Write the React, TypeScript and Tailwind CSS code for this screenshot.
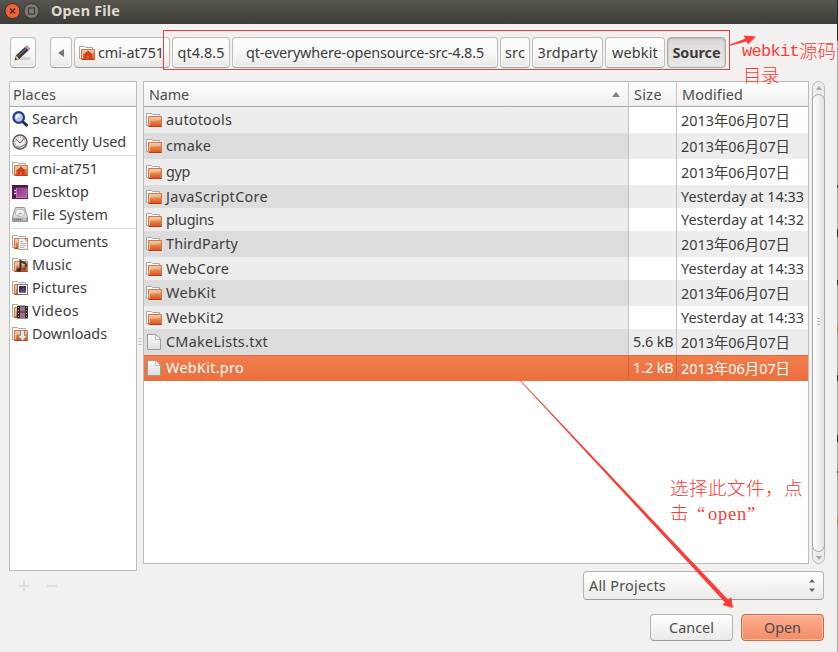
import { useLayoutEffect, useRef, useState, type ReactNode } from "react";

/** Single-line label whose letter spacing is adjusted to fill a given advance width. */
function Label({ children, w, className = "" }: { children: string; w: number; className?: string }) {
  const ref = useRef<HTMLSpanElement>(null);
  const [spacing, setSpacing] = useState(0);
  useLayoutEffect(() => {
    if (!ref.current) return;
    const natural = ref.current.getBoundingClientRect().width - spacing * children.length;
    setSpacing((w - natural) / children.length);
  }, [children, w]);
  return (
    <span ref={ref} className={`inline-block shrink-0 whitespace-pre ${className}`} style={{ letterSpacing: spacing }}>
      {children}
    </span>
  );
}

function FolderBase({ dim = false }: { dim?: boolean }) {
  return (
    <>
      <path d="M.5 13.5V1.5H5.5L6.5 2.5H13.5V13.5Z" fill={dim ? "#f6f6f5" : "#fff"} stroke="#aaa9a6" />
      <path d="M2.5 4.5H15.5V14.5H2.5Z" fill="url(#folderFill)" stroke="#d4764b" />
      <path d="M3 14.5H15.5" stroke="#bf3b17" />
      <path d="M3.5 9V5.5H14.5V8Q9 8.5 3.5 9Z" fill="#fff" opacity=".3" />
      <path d="M3.5 13.5V5.5H14.5" fill="none" stroke="#f6c9a4" strokeWidth=".8" />
    </>
  );
}

type IconName =
  | "folder" | "home" | "file" | "search" | "recent" | "desktop" | "disk"
  | "documents" | "music" | "pictures" | "videos" | "downloads";

function Icon({ name }: { name: IconName }) {
  return (
    <svg width="16" height="16" viewBox="0 0 16 16" className="shrink-0">
      {name === "folder" && <FolderBase />}
      {name === "home" && (
        <>
          <FolderBase />
          <path d="M9 5.5L4 10H5.3V13.5H8V11H10V13.5H12.7V10H14Z" fill="#c8401c" />
        </>
      )}
      {name === "file" && (
        <>
          <path d="M1.5 .5H10L14.5 5V15.5H1.5Z" fill="url(#paperFill)" stroke="#9b9b99" />
          <path d="M9.5 .5V5.5H14.5Z" fill="#fff" stroke="#aaa" strokeWidth=".8" />
        </>
      )}
      {name === "search" && (
        <>
          <path d="M10.5 10.5L14.5 14.2" stroke="#26324d" strokeWidth="3" strokeLinecap="round" />
          <circle cx="6.7" cy="6.5" r="5.3" fill="#b9c8e6" stroke="#25398f" strokeWidth="2.2" />
          <path d="M3.5 6.5A3.3 3.3 0 0 1 8.5 3.5L4.5 8Z" fill="#f3f7fd" />
        </>
      )}
      {name === "recent" && (
        <>
          <circle cx="8" cy="8" r="7" fill="#eee" stroke="#55565a" strokeWidth="1.4" />
          <circle cx="8" cy="8" r="5.1" fill="none" stroke="#98989a" strokeWidth="1.2" strokeDasharray="1 1.6" />
          <path d="M4 5L8 9L12.5 4" fill="none" stroke="#54565a" />
          <path d="M8 9L11 6" stroke="#cc2b24" />
          <path d="M2 12Q7 15 14 10" fill="none" stroke="#77787a" />
        </>
      )}
      {name === "desktop" && (
        <>
          <rect x=".5" y="1.5" width="15" height="13" fill="url(#purpleFill)" stroke="#582050" />
          <path d="M1 2.5H15" stroke="#351c33" strokeWidth="2" />
          <path d="M2.5 4V14" stroke="#511548" strokeWidth="3" />
          <path d="M2 6.5H4M2 9.5H4" stroke="#e9c7e3" strokeWidth="1.5" />
          <path d="M4.5 4V13.5H15V4" fill="none" stroke="#d188c4" strokeWidth=".7" />
        </>
      )}
      {name === "disk" && (
        <>
          <path d="M3.5 .5H12.5L15.5 10V14.5H.5V10Z" fill="#dededd" stroke="#969696" />
          <ellipse cx="8" cy="5.7" rx="4.5" ry="3.7" fill="#efefef" stroke="#b6b6b6" />
          <path d="M5.5 9.5L8 6L10 7" fill="none" stroke="#a5a5a5" />
          <path d="M1 10.8H15V14H1Z" fill="#a7a8a6" />
          <path d="M2 12.5H9" stroke="#686968" strokeWidth="1.5" strokeDasharray="1 1" />
          <path d="M11 12.5H14" stroke="#ddd" />
        </>
      )}
      {name === "documents" && (
        <>
          <FolderBase dim />
          <path d="M6.5 4.5H12L15.5 8V15.5H6.5Z" fill="#f0f0ee" stroke="#aaa" />
          <path d="M8 7.5H11M8 9.5H14M8 11.5H14M8 13.5H12" stroke="#aaa" strokeWidth=".8" />
        </>
      )}
      {name === "music" && (
        <>
          <FolderBase dim />
          <path d="M8.5 12V4L13.5 6.5Q14.5 8 13.5 10" fill="none" stroke="#353536" strokeWidth="2" />
          <ellipse cx="7" cy="13" rx="2.5" ry="2" fill="#353536" />
          <ellipse cx="12.3" cy="12" rx="2" ry="1.7" fill="#555" />
        </>
      )}
      {name === "pictures" && (
        <>
          <FolderBase dim />
          <path d="M5.5 4.5H15.5V14.5H5.5Z" fill="#fff" stroke="#777" />
          <path d="M7 6H14V12.5H7Z" fill="#392b4e" />
          <path d="M8 11L11 7L14 10V12.5H8Z" fill="#655b7d" opacity=".6" />
        </>
      )}
      {name === "videos" && (
        <>
          <FolderBase dim />
          <path d="M5 3H16V15.5H5Z" fill="#2e282c" />
          <path d="M8 3.5H13V8.5H8ZM8 9.5H13V15H8Z" fill="#a46c91" />
          <path d="M6.5 4V15M14.5 4V15" stroke="#d8cdd2" strokeWidth=".8" strokeDasharray="1 2" />
        </>
      )}
      {name === "downloads" && (
        <>
          <FolderBase dim />
          <path d="M8.5 4.5H12.5V9.5H15.5L10.5 15L5.5 9.5H8.5Z" fill="#e4e4e2" stroke="#8b8b89" />
        </>
      )}
    </svg>
  );
}

function PathButton({ width, children, active = false }: { width: string; children: ReactNode; active?: boolean }) {
  const skin = active
    ? "bg-linear-to-b from-[#dddbd9] to-[#ebe9e7] border-[#aaa8a5] shadow-[inset_0_1px_3px_#b7b5b3]"
    : "bg-linear-to-b from-white via-[#f8f8f7] to-[#e9e8e6] border-[#bfbdb9] border-b-[#a09e9a] shadow-[inset_0_0_0_1px_#fafaf9]";
  return (
    <div className={`flex h-[31px] shrink-0 items-center justify-center overflow-hidden rounded-[4px] border ${skin} ${width}`}>
      {children}
    </div>
  );
}

type Place = { icon: IconName; text: string; w: number };
const placeGroups: Place[][] = [
  [
    { icon: "search", text: "Search", w: 46 },
    { icon: "recent", text: "Recently Used", w: 94 },
  ],
  [
    { icon: "home", text: "cmi-at751", w: 66 },
    { icon: "desktop", text: "Desktop", w: 57 },
    { icon: "disk", text: "File System", w: 76 },
  ],
  [
    { icon: "documents", text: "Documents", w: 76 },
    { icon: "music", text: "Music", w: 40 },
    { icon: "pictures", text: "Pictures", w: 55 },
    { icon: "videos", text: "Videos", w: 47 },
    { icon: "downloads", text: "Downloads", w: 75 },
  ],
];

const DATE = "2013年06月07日";
type Row = { name: string; w: number; modified: string; size?: string; file?: boolean; selected?: boolean };
const rows: Row[] = [
  { name: "autotools", w: 66, modified: DATE },
  { name: "cmake", w: 45, modified: DATE },
  { name: "gyp", w: 24, modified: DATE },
  { name: "JavaScriptCore", w: 102, modified: "Yesterday at 14:33" },
  { name: "plugins", w: 48, modified: "Yesterday at 14:32" },
  { name: "ThirdParty", w: 72, modified: DATE },
  { name: "WebCore", w: 63, modified: "Yesterday at 14:33" },
  { name: "WebKit", w: 50, modified: DATE },
  { name: "WebKit2", w: 58, modified: "Yesterday at 14:33" },
  { name: "CMakeLists.txt", w: 102, modified: DATE, size: "5.6 kB", file: true },
  { name: "WebKit.pro", w: 78, modified: DATE, size: "1.2 kB", file: true, selected: true },
];

function FileRow({ row, index }: { row: Row; index: number }) {
  const tall = row.modified === DATE;
  const odd = index % 2 === 1;
  const nameBg = row.selected ? "" : odd ? "bg-[#dcdcdc]" : "bg-[#ededed]";
  const cellBg = row.selected ? "" : odd ? "bg-[#ededed]" : "bg-white";
  const line = row.selected ? "border-[#c8653c]" : "border-[#c3c3c3]";
  return (
    <div
      className={`flex ${tall ? "h-[26px]" : "h-[23px]"} ${
        row.selected ? "bg-linear-to-b from-[#f37d4c] to-[#ea6f3e] text-white shadow-[inset_0_1px_0_#e2673a]" : ""
      }`}
    >
      <div className={`flex w-[485px] items-center gap-1 border-r pl-[2px] ${nameBg} ${line}`}>
        <Icon name={row.file ? "file" : "folder"} />
        <Label w={row.w}>{row.name}</Label>
      </div>
      <div className={`flex w-12 items-center border-r pl-1 ${cellBg} ${line}`}>
        {row.size && <Label w={40.5}>{row.size}</Label>}
      </div>
      <div className={`flex flex-1 items-center pl-1 ${tall ? "pt-0.5" : ""} ${cellBg}`}>
        <Label w={tall ? 109 : 123}>{row.modified}</Label>
      </div>
    </div>
  );
}

const headerSkin = "flex h-[25px] items-center border-b border-[#aaa8a4] bg-linear-to-b from-white to-[#f0efee] text-[#4c4c4c]";

export default function App() {
  return (
    <div className="relative flex h-[652px] w-[838px] flex-col overflow-hidden bg-[#f2f1f0] font-['Noto_Sans','Noto_Sans_CJK_SC',sans-serif] text-[14.4px] leading-[20px] text-[#3c3c3c]">
      <svg width="0" height="0" className="absolute">
        <defs>
          <linearGradient id="folderFill" x1="0" y1="0" x2="0" y2="1">
            <stop offset="0" stopColor="#edb583" />
            <stop offset=".5" stopColor="#e58548" />
            <stop offset="1" stopColor="#d9501f" />
          </linearGradient>
          <linearGradient id="paperFill" x1="0" y1="0" x2="0" y2="1">
            <stop offset="0" stopColor="#fafafa" />
            <stop offset="1" stopColor="#dededd" />
          </linearGradient>
          <linearGradient id="purpleFill" x1="0" y1="0" x2="1" y2="1">
            <stop offset="0" stopColor="#8b2681" />
            <stop offset="1" stopColor="#b767ab" />
          </linearGradient>
        </defs>
      </svg>

      <header className="flex h-6 shrink-0 items-center bg-linear-to-b from-[#57554e] to-[#3d3c38] pb-[3px] pl-[4px]">
        <svg width="36" height="18" viewBox="0 0 36 18">
          <circle cx="8.5" cy="9" r="7.5" fill="#ee6238" stroke="#35332e" />
          <path d="M6 6.5L11 11.5M11 6.5L6 11.5" stroke="#54281a" strokeWidth="1.4" />
          <circle cx="27.5" cy="9" r="7.5" fill="#7c7a72" stroke="#35332e" />
          <rect x="24.5" y="6" width="6" height="6" fill="none" stroke="#3c3b37" strokeWidth="1.2" />
        </svg>
        <Label w={69} className="ml-[11px] font-bold text-[#dfdbd2]">Open File</Label>
      </header>

      <nav className="flex h-[57px] shrink-0 gap-0.5 pl-[10px] pt-[13px]">
        <PathButton width="w-[26px] mr-3">
          <svg width="18" height="18" viewBox="0 0 18 18">
            <ellipse cx="10" cy="14.5" rx="7" ry="1.8" fill="#d4d3d1" />
            <path d="M1 16L2.3 11.5L5.5 14.5Z" fill="#eee08c" stroke="#55523a" strokeWidth=".7" />
            <path d="M1 16L1.6 13.8L3 15.2Z" fill="#222" />
            <path d="M2.5 11.2L11.5 3L14.5 6L5.7 14.3Z" fill="#3c3c3c" stroke="#222" strokeWidth=".6" />
            <path d="M4.5 11.5L12 4.6" stroke="#8a8a8a" strokeWidth=".9" />
            <path d="M11.2 3.2L13 1.7L16 4.7L14.3 6.2Z" fill="#d08cc4" stroke="#99658f" strokeWidth=".6" />
          </svg>
        </PathButton>
        <PathButton width="w-[22px]">
          <svg width="6" height="8" viewBox="0 0 6 8"><path d="M6 0V8L0 4Z" fill="#777" /></svg>
        </PathButton>
        <div className="flex h-[31px] w-24 shrink-0 items-center gap-[3px] overflow-hidden rounded-[4px] border border-[#bfbdb9] border-b-[#a09e9a] bg-linear-to-b from-white via-[#f8f8f7] to-[#e9e8e6] pl-1">
          <Icon name="home" />
          <Label w={66}>cmi-at751</Label>
        </div>
        <PathButton width="w-[58px]"><Label w={47}>qt4.8.5</Label></PathButton>
        <PathButton width="w-[266px]"><Label w={238}>qt-everywhere-opensource-src-4.8.5</Label></PathButton>
        <PathButton width="w-[30px]"><Label w={20}>src</Label></PathButton>
        <PathButton width="w-[71px]"><Label w={60}>3rdparty</Label></PathButton>
        <PathButton width="w-[60px]"><Label w={46}>webkit</Label></PathButton>
        <PathButton width="w-[59px]" active><Label w={48} className="font-bold">Source</Label></PathButton>
      </nav>

      <main className="flex h-[490px] shrink-0 pl-[9px]">
        <aside className="h-[490px] w-32 border border-[#bebcb8] bg-white">
          <div className={`${headerSkin} pl-[3px] pt-px`}><Label w={43}>Places</Label></div>
          {placeGroups.map((group, i) => (
            <div key={i} className={i > 0 ? "pt-1" : ""}>
              {i > 0 && <div className="-mt-0.5 mb-px ml-px h-px bg-[#e0e0e0]" />}
              {group.map((p) => (
                <div key={p.text} className="flex h-[23px] items-center gap-1 pl-[2px]">
                  <Icon name={p.icon} />
                  <Label w={p.w}>{p.text}</Label>
                </div>
              ))}
            </div>
          ))}
        </aside>

        <div className="flex w-[6px] flex-col items-center gap-0.5 pt-[257px]">
          <i className="h-px w-1 bg-[#c9c7c4]" />
          <i className="h-px w-1 bg-[#c9c7c4]" />
          <i className="h-px w-1 bg-[#c9c7c4]" />
        </div>

        <section className="h-[483px] w-[666px] border border-[#bebcb8] bg-white">
          <div className={headerSkin}>
            <div className="flex h-full w-[485px] items-center justify-between border-r border-[#c9c7c4] pl-[5px] pr-[8px] pt-px">
              <Label w={40}>Name</Label>
              <svg width="8" height="5" viewBox="0 0 8 5"><path d="M4 0L8 5H0Z" fill="#808080" /></svg>
            </div>
            <div className="flex h-full w-12 items-center border-r border-[#c9c7c4] pl-[5px] pt-px"><Label w={28}>Size</Label></div>
            <div className="flex h-full items-center pl-[5px] pt-px"><Label w={61}>Modified</Label></div>
          </div>
          {rows.map((row, i) => <FileRow key={row.name} row={row} index={i} />)}
        </section>

        <div className="ml-[3px] flex h-[483px] w-[13px] flex-col items-center rounded-full border border-[#bebcb8] bg-[#edecea]">
          <div className="flex h-3 items-center"><svg width="6" height="4" viewBox="0 0 6 4"><path d="M3 0L6 4H0Z" fill="#aaa" /></svg></div>
          <div className="flex h-[458px] w-[13px] flex-col items-center justify-center gap-0.5 rounded-full border border-[#aaa8a5] bg-linear-to-r from-white to-[#e3e2e0] pb-1">
            <i className="h-px w-[3px] bg-[#b5b3b0]" />
            <i className="h-px w-[3px] bg-[#b5b3b0]" />
            <i className="h-px w-[3px] bg-[#b5b3b0]" />
          </div>
          <div className="flex h-[11px] items-center"><svg width="6" height="4" viewBox="0 0 6 4"><path d="M0 0H6L3 4Z" fill="#aaa" /></svg></div>
        </div>
      </main>

      <footer className="flex justify-between pl-[19px] pr-[14px]">
        <svg width="38" height="10" viewBox="0 0 38 10" className="mt-[10px]">
          <path d="M0 5H10M5 0V10M28 5H38" stroke="#dfdedc" strokeWidth="2" />
        </svg>
        <div className="flex flex-col items-end gap-[14px]">
          <div className="flex h-[29px] w-[241px] items-center justify-between rounded-[4px] border border-[#b5b3af] border-b-[#9d9b97] bg-linear-to-b from-white to-[#ebeae8] pl-[5px] pr-2 text-[#4c4c4c]">
            <Label w={77}>All Projects</Label>
            <svg width="6" height="13" viewBox="0 0 6 13"><path d="M3 0L6 3.5H0ZM0 9.5H6L3 13Z" fill="#666" /></svg>
          </div>
          <div className="flex gap-2 text-[#4c4c4c]">
            <div className="flex h-[27px] w-[83px] items-center justify-center rounded-[4px] border border-[#b5b3af] border-b-[#9d9b97] bg-linear-to-b from-white to-[#ebeae8]"><Label w={45}>Cancel</Label></div>
            <div className="flex h-[27px] w-[83px] items-center justify-center rounded-[4px] border border-[#bd7153] bg-linear-to-b from-[#fdae91] to-[#f38c66] shadow-[inset_0_0_0_1px_#ffb69b]"><Label w={37}>Open</Label></div>
          </div>
        </div>
      </footer>

      {/* Sliver of the desktop behind the window's right edge */}
      <svg width="1" height="652" className="absolute right-0 top-0">
        <path d="M.5 0V41" stroke="#25242a" />
        <path d="M.5 41V652" stroke="#a3a4a8" />
        <path d="M.5 185V188M.5 229V237M.5 280V285M.5 375V381M.5 435V442M.5 471V473" stroke="#2c2b38" />
        <path d="M.5 325V333M.5 517V525" stroke="#a58a45" />
      </svg>

      {/* Red annotations */}
      <div className="absolute left-[163px] top-[30px] h-10 w-[567px] border border-[#f23c3c]" />
      <svg width="838" height="652" className="absolute left-0 top-0" fill="#fb3b36">
        <path d="M729 45L745 38.7L744 35.5L756 36.5L748 44.5L746.5 41.5L729 46Z" />
        <path d="M519.7 380.5L520.7 380.5L728 599.5L731.3 597L733 608L722.5 605L724.8 602.2Z" />
      </svg>
      <div className="absolute left-[742px] top-[40px] flex flex-col text-[18.5px] leading-6 text-[#fb3b36] font-['Liberation_Serif','Noto_Sans_CJK_SC',serif] font-light">
        <div className="flex"><Label w={57} className="font-['Liberation_Mono',monospace] text-[17px]">webkit</Label><Label w={37}>源码</Label></div>
        <Label w={37} className="self-start pl-px">目录</Label>
      </div>
      <div className="absolute left-[670px] top-[477px] flex flex-col items-start text-[18.5px] leading-[25px] text-[#fb3b36] font-['Liberation_Serif','Noto_Sans_CJK_SC',serif] font-light">
        <Label w={133}>选择此文件，点</Label>
        <div className="flex"><Label w={19}>击</Label><Label w={9} className="ml-[8px]">“</Label><Label w={39} className="ml-0.5">open</Label><Label w={9}>”</Label></div>
      </div>
    </div>
  );
}
